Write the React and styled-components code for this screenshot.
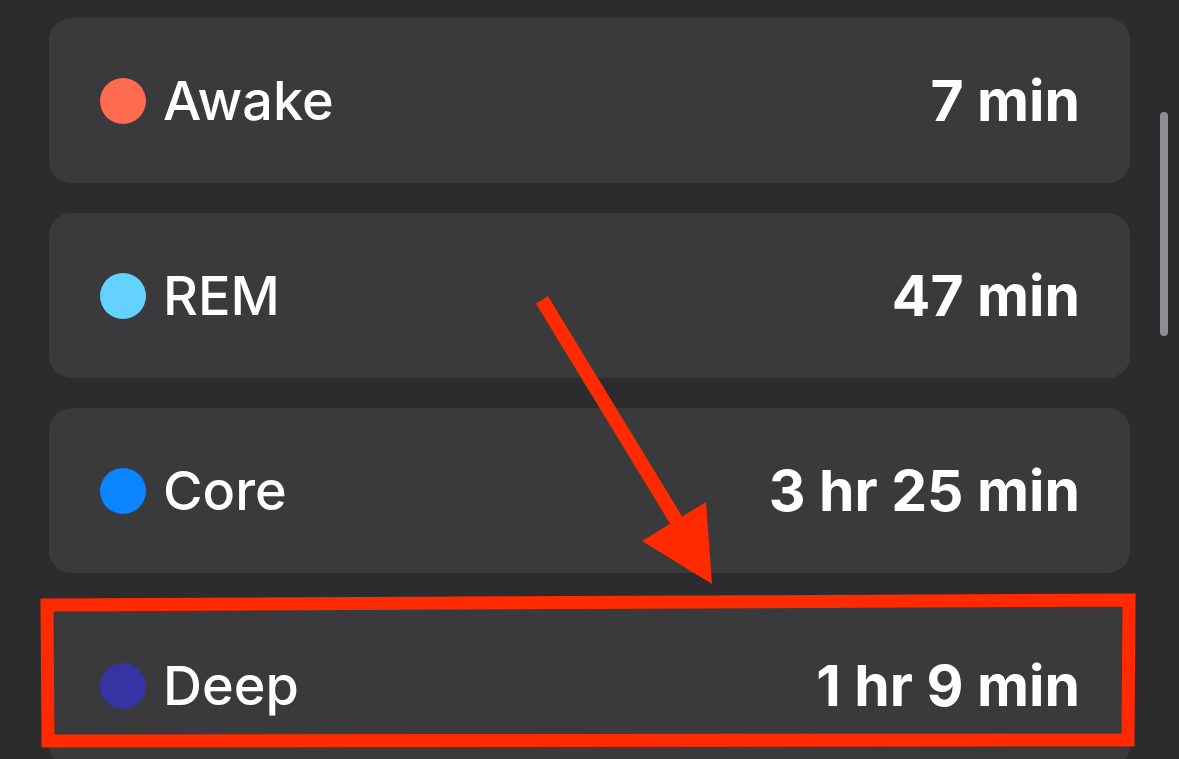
import styled, { createGlobalStyle } from "styled-components";

const GlobalStyle = createGlobalStyle`
  html, body {
    margin: 0;
    height: 759px;
    overflow: hidden;
    background: #2c2c2e;
    font-family: Inter, "Liberation Sans", sans-serif;
    -webkit-font-smoothing: antialiased;
  }
`;

const Screen = styled.div`
  position: relative;
  width: 1179px;
  height: 759px;
  overflow: hidden;
`;

const List = styled.div`
  display: flex;
  flex-direction: column;
  gap: 30px;
  width: 1081px;
  padding: 18px 0 0 49px;
`;

const StageCard = styled.div`
  display: flex;
  align-items: center;
  height: 165px;
  flex-shrink: 0;
  padding: 0 50px 0 51px;
  box-sizing: border-box;
  background: #3a3a3c;
  border-radius: 22px;
  color: #ffffff;
`;

const Dot = styled.span`
  width: 46px;
  height: 46px;
  border-radius: 50%;
  background: ${(p) => p.$color};
  margin-right: 17px;
  flex-shrink: 0;
`;

const Label = styled.span`
  font-size: 54px;
  font-weight: 500;
  letter-spacing: 0;
`;

const Value = styled.span`
  margin-left: auto;
  font-size: 57px;
  font-weight: 700;
  letter-spacing: 0;
`;

const ScrollThumb = styled.div`
  position: absolute;
  left: 1160px;
  top: 112px;
  width: 8px;
  height: 224px;
  border-radius: 4px;
  background: #8e8e93;
`;

const Annotation = styled.svg`
  position: absolute;
  inset: 0;
  pointer-events: none;
`;

const stages = [
  { name: "Awake", value: "7 min", color: "#ff6b4f" },
  { name: "REM", value: "47 min", color: "#64d2ff" },
  { name: "Core", value: "3 hr 25 min", color: "#0a84ff" },
  { name: "Deep", value: "1 hr 9 min", color: "#3634a3" },
];

export default function App() {
  return (
    <Screen>
      <GlobalStyle />
      <List>
        {stages.map((s) => (
          <StageCard key={s.name}>
            <Dot $color={s.color} />
            <Label>{s.name}</Label>
            <Value>{s.value}</Value>
          </StageCard>
        ))}
      </List>
      <ScrollThumb />
      <Annotation width="1179" height="759" viewBox="0 0 1179 759">
        <line x1="542" y1="300" x2="684" y2="533" stroke="#ff2a00" strokeWidth="14" />
        <polygon points="642,541 706,502 712,584" fill="#ff2a00" />
        <path
          d="M47 605 L1129 600 L1128 740 L48 741 Z"
          fill="none"
          stroke="#ff2a00"
          strokeWidth="13"
          strokeLinejoin="miter"
        />
      </Annotation>
    </Screen>
  );
}
